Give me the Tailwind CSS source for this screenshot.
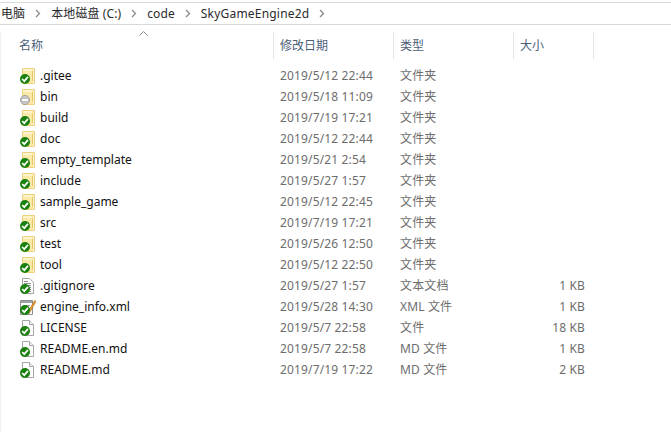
<!DOCTYPE html>
<html lang="zh">
<head>
<meta charset="utf-8">
<script src="https://cdn.jsdelivr.net/npm/@tailwindcss/browser@4"></script>
</head>
<body class="bg-white overflow-hidden font-['Noto_Sans','Noto_Sans_CJK_SC',sans-serif] text-[12px]">
<svg width="0" height="0" class="absolute">
  <defs>
    <symbol id="folder" viewBox="0 0 16 16">
      <path d="M3.5 .5H15.5V15.5H3.5Z" fill="#fbe9a9" stroke="#ecd27e"/>
      <path d="M13.5 3V13" stroke="#e8c765" fill="none"/>
      <rect x="4" y="1" width="9.5" height="2" fill="#fdf3cd"/>
      <rect x="14" y="3" width="1" height="12" fill="#fdf3cd"/>
    </symbol>
    <symbol id="doc" viewBox="0 0 16 16">
      <path d="M3.5 .5H10.5L14.5 4.5V15.5H3.5Z" fill="#fff" stroke="#a6a6a6"/>
      <path d="M10.5 .5V4.5H14.5" fill="#eee" stroke="#a6a6a6"/>
    </symbol>
    <symbol id="text" viewBox="0 0 16 16">
      <path d="M3.5 .5H10.5L14.5 4.5V15.5H3.5Z" fill="#fff" stroke="#a6a6a6"/>
      <path d="M5 3.5H9M5 5.5H12M5 7.5H12M5 9.5H12M9 11.5H12M9 13.5H12" stroke="#8c8c8c"/>
    </symbol>
    <symbol id="xml" viewBox="0 0 18 16">
      <path d="M1.5 1.5H13.5V15.5H1.5Z" fill="#fff" stroke="#8f8f8f"/>
      <path d="M2 2H13V4H2Z" fill="#9aa5b0"/>
      <path d="M4 6.5H11M4 8.5H10" stroke="#9c9c9c"/>
      <path d="M9 13L15.5 1.5L17 2.5L10.5 14L8.5 15Z" fill="#e9a22c" stroke="#9a5a14" stroke-width=".5"/>
    </symbol>
    <symbol id="ok" viewBox="0 0 12 12">
      <circle cx="6" cy="6" r="6" fill="#1a800e"/>
      <path d="M2.6 6L5.1 8.6L9.6 3.4" fill="none" stroke="#fff" stroke-width="2"/>
    </symbol>
    <symbol id="ignored" viewBox="0 0 12 12">
      <circle cx="6" cy="6" r="5.5" fill="#c9c9c9" stroke="#9a9a9a"/>
      <rect x="2" y="4.6" width="8" height="2.8" fill="#fff" stroke="#9a9a9a" stroke-width=".5"/>
    </symbol>
  </defs>
</svg>

<div class="mt-[2px] h-[23px] border-y border-[#d9d9d9] flex items-center text-[#2b2b2b] text-[12px] tracking-[0.1px] whitespace-nowrap">
  <span class="ml-[1px]">电脑</span>
  <svg class="ml-[10px] mr-[10px]" width="6" height="9" viewBox="0 0 6 9"><path d="M1 1L4.5 4.5L1 8" fill="none" stroke="#8a8a8a" stroke-width="1.3"/></svg>
  <span>本地磁盘 (C:)</span>
  <svg class="ml-[10px] mr-[10px]" width="6" height="9" viewBox="0 0 6 9"><path d="M1 1L4.5 4.5L1 8" fill="none" stroke="#8a8a8a" stroke-width="1.3"/></svg>
  <span>code</span>
  <svg class="ml-[10px] mr-[10px]" width="6" height="9" viewBox="0 0 6 9"><path d="M1 1L4.5 4.5L1 8" fill="none" stroke="#8a8a8a" stroke-width="1.3"/></svg>
  <span class="tracking-[0.2px]">SkyGameEngine2d</span>
  <svg class="ml-[10px]" width="6" height="9" viewBox="0 0 6 9"><path d="M1 1L4.5 4.5L1 8" fill="none" stroke="#8a8a8a" stroke-width="1.3"/></svg>
</div>

<div class="mt-[7px] h-[400px] shadow-[inset_1px_0_0_#f0f0f0]">
<div class="relative h-[27px] grid grid-cols-[274px_120px_120px_80px] text-[#4c607a]">
  <svg class="absolute left-[139px] top-[-1px]" width="9" height="5" viewBox="0 0 9 5"><path d="M.5 4.5L4.5 .5L8.5 4.5" fill="none" stroke="#8a8a8a"/></svg>
  <div class="pl-[19px] pt-[5px] border-r border-[#e5e5e5]">名称</div>
  <div class="pl-[6px] pt-[5px] border-r border-[#e5e5e5]">修改日期</div>
  <div class="pl-[6px] pt-[5px] border-r border-[#e5e5e5]">类型</div>
  <div class="pl-[6px] pt-[5px] border-r border-[#e5e5e5]">大小</div>
</div>

<div class="mt-[6px] text-[#6d6d6d] leading-[21px] tracking-[0.15px]">
  <div class="h-[21px] grid grid-cols-[280px_120px_120px_65px] items-center"><div class="flex items-center pl-[19px] text-[#111] tracking-normal"><span class="relative w-[16px] h-[16px] mr-[5px]"><svg class="w-[16px] h-[16px]"><use href="#folder"/></svg><svg class="absolute left-[1px] bottom-0 w-[10px] h-[10px]"><use href="#ok"/></svg></span>.gitee</div><div>2019/5/12 22:44</div><div>文件夹</div><div class="text-right"></div></div>
  <div class="h-[21px] grid grid-cols-[280px_120px_120px_65px] items-center"><div class="flex items-center pl-[19px] text-[#111] tracking-normal"><span class="relative w-[16px] h-[16px] mr-[5px]"><svg class="w-[16px] h-[16px]"><use href="#folder"/></svg><svg class="absolute left-[1px] bottom-0 w-[10px] h-[10px]"><use href="#ignored"/></svg></span>bin</div><div>2019/5/18 11:09</div><div>文件夹</div><div class="text-right"></div></div>
  <div class="h-[21px] grid grid-cols-[280px_120px_120px_65px] items-center"><div class="flex items-center pl-[19px] text-[#111] tracking-normal"><span class="relative w-[16px] h-[16px] mr-[5px]"><svg class="w-[16px] h-[16px]"><use href="#folder"/></svg><svg class="absolute left-[1px] bottom-0 w-[10px] h-[10px]"><use href="#ok"/></svg></span>build</div><div>2019/7/19 17:21</div><div>文件夹</div><div class="text-right"></div></div>
  <div class="h-[21px] grid grid-cols-[280px_120px_120px_65px] items-center"><div class="flex items-center pl-[19px] text-[#111] tracking-normal"><span class="relative w-[16px] h-[16px] mr-[5px]"><svg class="w-[16px] h-[16px]"><use href="#folder"/></svg><svg class="absolute left-[1px] bottom-0 w-[10px] h-[10px]"><use href="#ok"/></svg></span>doc</div><div>2019/5/12 22:44</div><div>文件夹</div><div class="text-right"></div></div>
  <div class="h-[21px] grid grid-cols-[280px_120px_120px_65px] items-center"><div class="flex items-center pl-[19px] text-[#111] tracking-normal"><span class="relative w-[16px] h-[16px] mr-[5px]"><svg class="w-[16px] h-[16px]"><use href="#folder"/></svg><svg class="absolute left-[1px] bottom-0 w-[10px] h-[10px]"><use href="#ok"/></svg></span>empty_template</div><div>2019/5/21 2:54</div><div>文件夹</div><div class="text-right"></div></div>
  <div class="h-[21px] grid grid-cols-[280px_120px_120px_65px] items-center"><div class="flex items-center pl-[19px] text-[#111] tracking-normal"><span class="relative w-[16px] h-[16px] mr-[5px]"><svg class="w-[16px] h-[16px]"><use href="#folder"/></svg><svg class="absolute left-[1px] bottom-0 w-[10px] h-[10px]"><use href="#ok"/></svg></span>include</div><div>2019/5/27 1:57</div><div>文件夹</div><div class="text-right"></div></div>
  <div class="h-[21px] grid grid-cols-[280px_120px_120px_65px] items-center"><div class="flex items-center pl-[19px] text-[#111] tracking-normal"><span class="relative w-[16px] h-[16px] mr-[5px]"><svg class="w-[16px] h-[16px]"><use href="#folder"/></svg><svg class="absolute left-[1px] bottom-0 w-[10px] h-[10px]"><use href="#ok"/></svg></span>sample_game</div><div>2019/5/12 22:45</div><div>文件夹</div><div class="text-right"></div></div>
  <div class="h-[21px] grid grid-cols-[280px_120px_120px_65px] items-center"><div class="flex items-center pl-[19px] text-[#111] tracking-normal"><span class="relative w-[16px] h-[16px] mr-[5px]"><svg class="w-[16px] h-[16px]"><use href="#folder"/></svg><svg class="absolute left-[1px] bottom-0 w-[10px] h-[10px]"><use href="#ok"/></svg></span>src</div><div>2019/7/19 17:21</div><div>文件夹</div><div class="text-right"></div></div>
  <div class="h-[21px] grid grid-cols-[280px_120px_120px_65px] items-center"><div class="flex items-center pl-[19px] text-[#111] tracking-normal"><span class="relative w-[16px] h-[16px] mr-[5px]"><svg class="w-[16px] h-[16px]"><use href="#folder"/></svg><svg class="absolute left-[1px] bottom-0 w-[10px] h-[10px]"><use href="#ok"/></svg></span>test</div><div>2019/5/26 12:50</div><div>文件夹</div><div class="text-right"></div></div>
  <div class="h-[21px] grid grid-cols-[280px_120px_120px_65px] items-center"><div class="flex items-center pl-[19px] text-[#111] tracking-normal"><span class="relative w-[16px] h-[16px] mr-[5px]"><svg class="w-[16px] h-[16px]"><use href="#folder"/></svg><svg class="absolute left-[1px] bottom-0 w-[10px] h-[10px]"><use href="#ok"/></svg></span>tool</div><div>2019/5/12 22:50</div><div>文件夹</div><div class="text-right"></div></div>
  <div class="h-[21px] grid grid-cols-[280px_120px_120px_65px] items-center"><div class="flex items-center pl-[19px] text-[#111] tracking-normal"><span class="relative w-[16px] h-[16px] mr-[5px]"><svg class="w-[16px] h-[16px]"><use href="#text"/></svg><svg class="absolute left-[1px] bottom-0 w-[10px] h-[10px]"><use href="#ok"/></svg></span>.gitignore</div><div>2019/5/27 1:57</div><div>文本文档</div><div class="text-right">1 KB</div></div>
  <div class="h-[21px] grid grid-cols-[280px_120px_120px_65px] items-center"><div class="flex items-center pl-[19px] text-[#111] tracking-normal"><span class="relative w-[16px] h-[16px] mr-[5px]"><svg class="w-[18px] h-[16px]"><use href="#xml"/></svg><svg class="absolute left-[1px] bottom-0 w-[10px] h-[10px]"><use href="#ok"/></svg></span>engine_info.xml</div><div>2019/5/28 14:30</div><div>XML 文件</div><div class="text-right">1 KB</div></div>
  <div class="h-[21px] grid grid-cols-[280px_120px_120px_65px] items-center"><div class="flex items-center pl-[19px] text-[#111] tracking-normal"><span class="relative w-[16px] h-[16px] mr-[5px]"><svg class="w-[16px] h-[16px]"><use href="#doc"/></svg><svg class="absolute left-[1px] bottom-0 w-[10px] h-[10px]"><use href="#ok"/></svg></span>LICENSE</div><div>2019/5/7 22:58</div><div>文件</div><div class="text-right">18 KB</div></div>
  <div class="h-[21px] grid grid-cols-[280px_120px_120px_65px] items-center"><div class="flex items-center pl-[19px] text-[#111] tracking-normal"><span class="relative w-[16px] h-[16px] mr-[5px]"><svg class="w-[16px] h-[16px]"><use href="#doc"/></svg><svg class="absolute left-[1px] bottom-0 w-[10px] h-[10px]"><use href="#ok"/></svg></span>README.en.md</div><div>2019/5/7 22:58</div><div>MD 文件</div><div class="text-right">1 KB</div></div>
  <div class="h-[21px] grid grid-cols-[280px_120px_120px_65px] items-center"><div class="flex items-center pl-[19px] text-[#111] tracking-normal"><span class="relative w-[16px] h-[16px] mr-[5px]"><svg class="w-[16px] h-[16px]"><use href="#doc"/></svg><svg class="absolute left-[1px] bottom-0 w-[10px] h-[10px]"><use href="#ok"/></svg></span>README.md</div><div>2019/7/19 17:22</div><div>MD 文件</div><div class="text-right">2 KB</div></div>
</div>
</div>
</body>
</html>
